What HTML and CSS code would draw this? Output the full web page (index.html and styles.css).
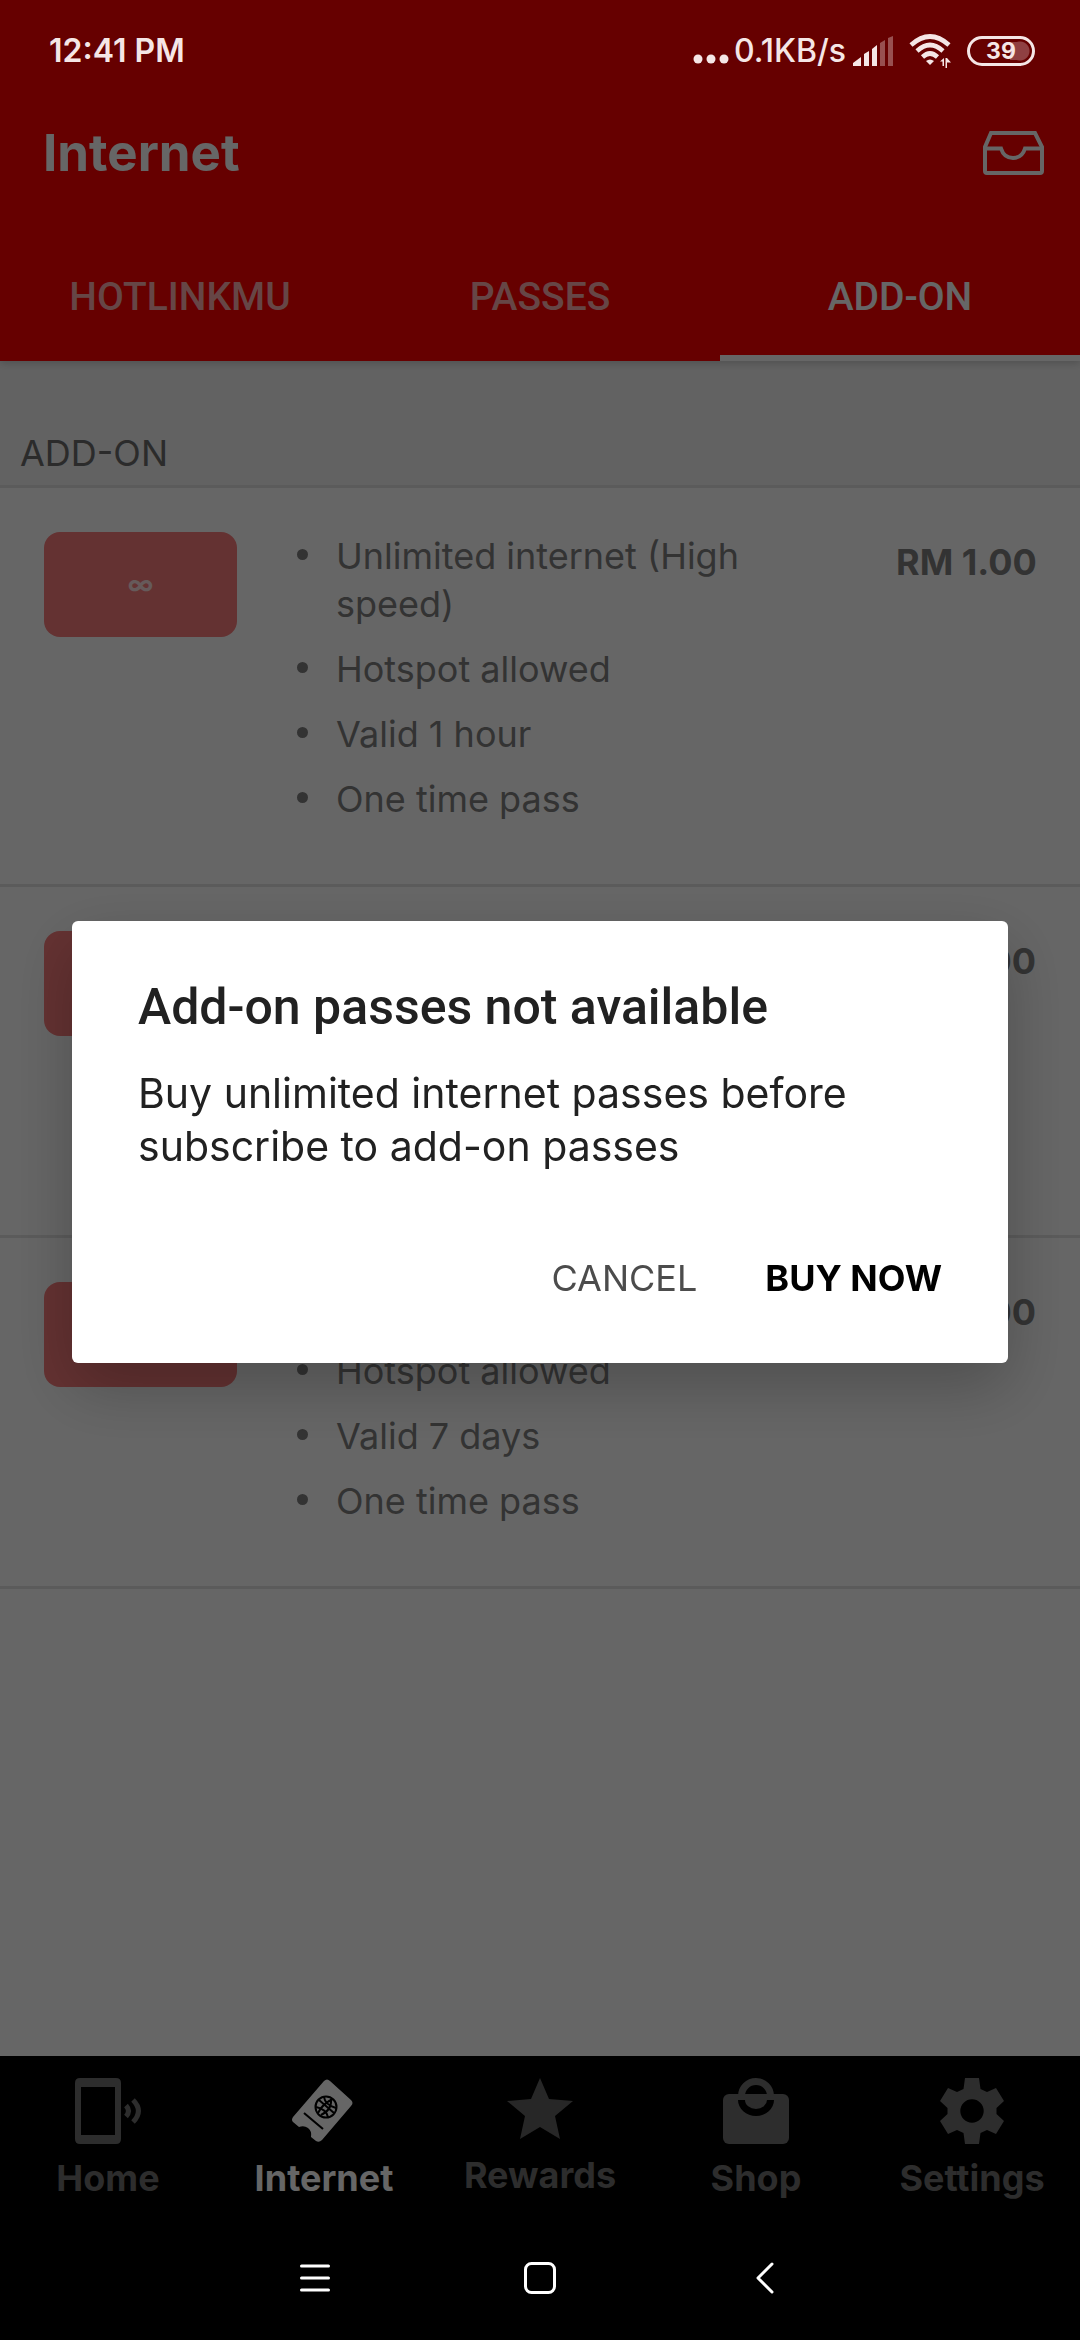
FILE: index.html
```html
<!DOCTYPE html>
<html lang="en">
<head>
<meta charset="utf-8">
<meta name="viewport" content="width=device-width, initial-scale=1">
<title>Internet</title>
<link rel="stylesheet" href="styles.css">
</head>
<body>
<div class="status-bar">
  <span class="clock">12:41 PM</span>
  <div class="status-right">
    <svg class="dots" width="36" height="10" viewBox="0 0 36 10" fill="currentColor" aria-hidden="true"><circle cx="5" cy="5" r="4.5"/><circle cx="18" cy="5" r="4.5"/><circle cx="31" cy="5" r="4.5"/></svg>
    <span class="speed">0.1KB/s</span>
    <svg class="signal" width="40" height="30" viewBox="0 0 40 30" fill="currentColor" aria-hidden="true">
      <path d="M0 30V27L8 21V30ZM11 30V18L16 15V30ZM19 30V13L24 9V30Z"/>
      <path d="M27 30V7L32 4V30ZM35 30V2L40 0V30Z" opacity=".35"/>
    </svg>
    <svg class="wifi" width="44" height="34" viewBox="0 0 44 34" fill="none" stroke="currentColor" stroke-width="4.6" aria-hidden="true">
      <path d="M2 11Q21-6 40 11M8 17Q21 5 34 17M13.500 23Q21 16 28.500 23"/>
      <path d="M17 27Q21 24 25 27L21 31Z" fill="currentColor" stroke="none"/>
      <path d="M31 27.500 35 24V32H33.500V27.500ZM36.500 24H38V34H36.500ZM38 24 42 28.500H38Z" fill="currentColor" stroke="none"/>
    </svg>
    <span class="battery">39</span>
  </div>
</div>

<div class="app">
  <header class="app-header">
    <div class="title-bar">
      <h1 class="title">Internet</h1>
      <button class="inbox" type="button" aria-label="Inbox">
        <svg width="61" height="44" viewBox="0 0 61 44" fill="none" stroke="currentColor" stroke-width="4"><path d="M8 2H52L59 16V40Q59 42 57 42H4Q2 42 2 40V16Z"/><path d="M2 17.500H18Q21 27 30 27T42 17.500H59"/></svg>
      </button>
    </div>
    <nav class="tabs">
      <a class="tab" href="#hotlinkmu">HOTLINKMU</a>
      <a class="tab" href="#passes">PASSES</a>
      <a class="tab tab-active" href="#add-on">ADD-ON</a>
    </nav>
  </header>

  <main class="content">
    <h2 class="section-title">ADD-ON</h2>
    <article class="pass">
      <div class="tile">∞</div>
      <ul class="features">
        <li>Unlimited internet (High speed)</li>
        <li>Hotspot allowed</li>
        <li>Valid 1 hour</li>
        <li>One time pass</li>
      </ul>
      <p class="price">RM 1.00</p>
    </article>
    <article class="pass">
      <div class="tile"></div>
      <ul class="features"></ul>
      <p class="price">.00</p>
    </article>
    <article class="pass">
      <div class="tile"></div>
      <ul class="features">
        <li>Hotspot allowed</li>
        <li>Valid 7 days</li>
        <li>One time pass</li>
      </ul>
      <p class="price">.00</p>
    </article>
  </main>

  <nav class="bottom-nav">
    <a class="nav-item" href="#home">
      <svg width="66" height="66" viewBox="0 0 66 66" aria-hidden="true"><path fill="currentColor" fill-rule="evenodd" d="M5 0H41Q46 0 46 5V61Q46 66 41 66H5Q0 66 0 61V5Q0 0 5 0ZM6 9V57H40V9Z"/><path fill="none" stroke="currentColor" stroke-width="5" d="M51 27.500Q56 33 51 38.500M58 22Q69 33 58 44"/></svg>
      <span>Home</span>
    </a>
    <a class="nav-item nav-active" href="#internet">
      <svg width="66" height="66" viewBox="0 0 66 66" aria-hidden="true">
        <path fill="currentColor" d="M33 3Q36 0 39 3L60 22Q63 25 60 28L31 62Q28 65 25 63L20 59Q21 53 17 50Q13 47 8 49L2 44Q0 42 2 39Z"/>
        <g class="nav-cut"><circle cx="35" cy="29" r="10.500"/><path d="M28 22 43 35M27 35Q32 25 42 21M25 29Q35 31 37 39M33 19Q34 27 45 30M30 37Q41 32 40 21"/><path d="M13 35 32 51"/></g>
      </svg>
      <span>Internet</span>
    </a>
    <a class="nav-item" href="#rewards">
      <svg class="star" width="66" height="63" viewBox="0 0 66 63" fill="currentColor" aria-hidden="true"><path d="M33 0 42 21 66 23 48 38 53 61 33 49 13 61 18 38 0 23 24 21Z"/></svg>
      <span>Rewards</span>
    </a>
    <a class="nav-item" href="#shop">
      <svg width="66" height="66" viewBox="0 0 66 66" aria-hidden="true"><rect y="16" width="66" height="50" rx="6" fill="currentColor"/><path d="M18.500 18a14.500 14.500 0 0 1 29 0" fill="none" stroke="currentColor" stroke-width="7"/><path d="M15 22H22A11 9 0 0 0 44 22H51A18 16 0 0 1 15 22Z" fill="#000"/></svg>
      <span>Shop</span>
    </a>
    <a class="nav-item" href="#settings">
      <svg width="64" height="66" viewBox="0 0 64 66" fill="currentColor" aria-hidden="true"><path fill-rule="evenodd" d="M25 0H39L40.500 11 47 14 56 10 64 23 56.500 30V36L64 43 56 56 47 52 40.500 55 39 66H25L23.500 55 17 52 8 56 0 43 7.500 36V30L0 23 8 10 17 14 23.500 11ZM32 21.300A11.700 11.700 0 1 0 32 44.700A11.700 11.700 0 1 0 32 21.300Z"/></svg>
      <span>Settings</span>
    </a>
  </nav>
</div>

<div class="scrim">
  <div class="dialog" role="alertdialog" aria-modal="true" aria-labelledby="dialog-title" aria-describedby="dialog-text">
    <h2 class="dialog-title" id="dialog-title">Add-on passes not available</h2>
    <p class="dialog-text" id="dialog-text">Buy unlimited internet passes before subscribe to add-on passes</p>
    <div class="dialog-actions">
      <button class="action" type="button">CANCEL</button>
      <button class="action action-primary" type="button">BUY NOW</button>
    </div>
  </div>
</div>

<div class="system-nav">
  <button type="button" aria-label="Recent apps"><svg width="30" height="32" viewBox="0 0 30 32" fill="none" stroke="currentColor" stroke-width="3" stroke-linecap="round"><path d="M1.500 4H28.500M1.500 16H28.500M1.500 28H28.500"/></svg></button>
  <button type="button" aria-label="Home screen"><svg width="32" height="32" viewBox="0 0 32 32" fill="none" stroke="currentColor" stroke-width="3"><rect x="1.500" y="1.500" width="29" height="29" rx="6"/></svg></button>
  <button type="button" aria-label="Back"><svg width="18" height="32" viewBox="0 0 18 32" fill="none" stroke="currentColor" stroke-width="3" stroke-linecap="round" stroke-linejoin="round"><path d="M16 2 2 16 16 30"/></svg></button>
</div>
</body>
</html>
```
FILE: styles.css
```css
* {
  box-sizing: border-box;
}

body {
  margin: 0;
  min-height: 100vh;
  display: flex;
  flex-direction: column;
  background: #fff;
  font-family: Inter, "Noto Sans", sans-serif;
}

h1,
h2,
p,
ul {
  margin: 0;
  padding: 0;
}

a {
  color: inherit;
  text-decoration: none;
}

button {
  padding: 0;
  border: 0;
  background: none;
  color: inherit;
  font: inherit;
}

svg {
  display: block;
  flex: none;
}

/* System status bar: stays above the scrim */
.status-bar {
  position: relative;
  z-index: 2;
  display: flex;
  justify-content: space-between;
  padding: 31px 45px 4px 49px;
  background: #600;
  color: #f5e6e6;
  font-size: 32px;
  line-height: 40px;
}

.clock {
  font-weight: 600;
}

.status-right {
  display: flex;
  align-items: center;
}

.dots {
  margin-top: 16px;
}

.speed {
  margin: 0 7px 0 5px;
  font-weight: 500;
}

.wifi {
  margin: 0 14px 0 16px;
}

.battery {
  width: 68px;
  height: 30px;
  border: 3px solid currentColor;
  border-radius: 15px;
  background:
    linear-gradient(#600, #600) 0 0 / 40px 24px no-repeat,
    radial-gradient(circle at 50px 12px, #8f4042 9px, transparent 10px) no-repeat,
    linear-gradient(#8f4042, #8f4042) 40px 3px / 10px 18px no-repeat;
  font-size: 23px;
  font-weight: 700;
  line-height: 25px;
  text-align: center;
}

/* App */
.app {
  flex: 1;
  display: flex;
  flex-direction: column;
}

.app-header {
  position: relative;
  background: #f00;
  color: #fff;
  box-shadow: 0 2px 8px rgba(0, 0, 0, .2);
}

.title-bar {
  display: flex;
  align-items: center;
  justify-content: space-between;
  height: 156px;
  padding: 0 36px 0 43px;
}

.title {
  font-size: 51px;
  font-weight: 700;
  line-height: 60px;
}

.tabs {
  display: grid;
  grid-template-columns: repeat(3, 1fr);
}

.tab {
  padding: 44px 0 42px;
  color: #ffafaf;
  font: 500 39px/44px Roboto, sans-serif;
  text-align: center;
}

.tab-active {
  padding-bottom: 36px;
  border-bottom: 6px solid #fff;
  color: #fff;
}

.content {
  flex: 1;
}

.section-title {
  padding: 70px 20px 10px;
  border-bottom: 3px solid #e4e4e4;
  background: #f5f5f5;
  color: #6c6c6c;
  font-size: 36px;
  font-weight: 400;
  line-height: 44px;
}

.pass {
  display: grid;
  grid-template-columns: 193px 1fr 140px;
  column-gap: 60px;
  align-items: start;
  min-height: 351px;
  padding: 44px 44px 61px;
  border-bottom: 3px solid #e4e4e4;
  color: #808080;
}

.tile {
  height: 105px;
  border-radius: 16px;
  background: #fa7d7d;
  color: #ffe0e0;
  font-size: 26px;
  font-weight: 700;
  line-height: 105px;
  text-align: center;
}

.features {
  display: grid;
  gap: 17px;
  align-self: end;
  list-style: none;
  font-size: 36px;
  font-weight: 400;
  line-height: 48px;
}

.features li {
  display: flex;
  gap: 28px;
}

.features li::before {
  content: "";
  flex: none;
  width: 11px;
  height: 11px;
  margin-top: 17px;
  border-radius: 50%;
  background: currentColor;
}

.price {
  padding-top: 6px;
  font-size: 36px;
  font-weight: 700;
  line-height: 48px;
  text-align: right;
  white-space: nowrap;
}

.bottom-nav {
  display: grid;
  grid-template-columns: repeat(5, 1fr);
  padding: 22px 0 16px;
  background: #000;
  color: #707070;
}

.nav-item {
  display: flex;
  flex-direction: column;
  align-items: center;
  gap: 12px;
  font-size: 36px;
  font-weight: 700;
  line-height: 44px;
}

.nav-active {
  color: #fff;
}

.nav-cut {
  fill: none;
  stroke: #000;
  stroke-width: 2;
}

.star {
  color: #626262;
}

/* Dialog */
.scrim {
  position: fixed;
  inset: 0;
  z-index: 1;
  display: grid;
  align-items: center;
  padding: 78px 72px 134px;
  background: rgba(0, 0, 0, .6);
}

.dialog {
  padding: 56px 66px 63px;
  border-radius: 6px;
  background: #fff;
  box-shadow: 0 24px 64px rgba(0, 0, 0, .24);
}

.dialog-title {
  color: #212121;
  font: 500 50px/60px Roboto, sans-serif;
}

.dialog-text {
  margin-top: 30px;
  color: #212121;
  font-size: 41px;
  font-weight: 400;
  line-height: 53px;
}

.dialog-actions {
  display: flex;
  justify-content: flex-end;
  gap: 68px;
  margin-top: 83px;
}

.action {
  color: #4c4c4c;
  font-size: 36px;
  font-weight: 400;
  line-height: 44px;
}

.action-primary {
  color: #000;
  font-weight: 700;
}

/* System navigation: stays above the scrim */
.system-nav {
  position: relative;
  z-index: 2;
  display: flex;
  justify-content: center;
  gap: 75px;
  padding: 46px 0;
  background: #000;
  color: #fff;
}

.system-nav button {
  display: flex;
  justify-content: center;
  width: 150px;
}
```
